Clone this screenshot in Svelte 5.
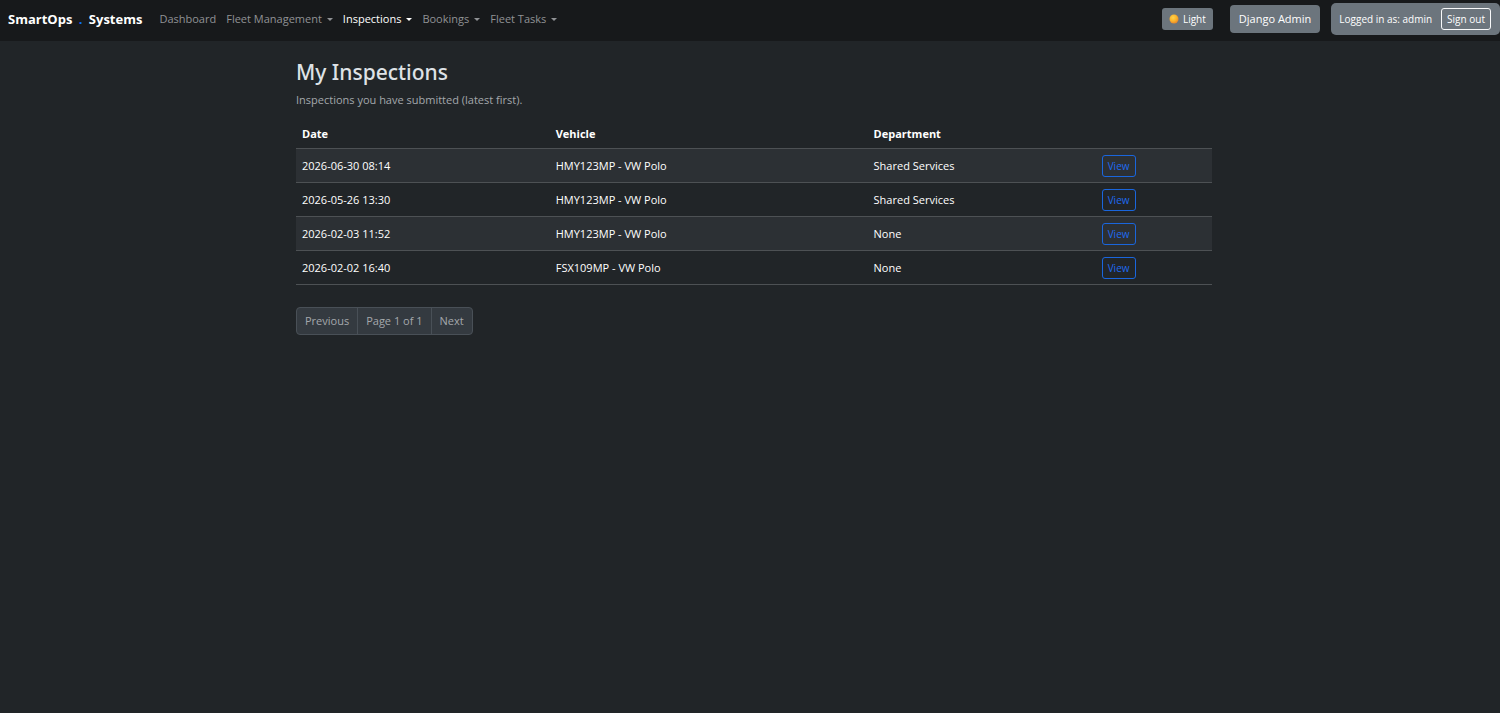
<script lang="ts">
  type NavItem = { label: string; menu: boolean; active?: boolean };

  const navItems: NavItem[] = [
    { label: 'Dashboard', menu: false },
    { label: 'Fleet Management', menu: true },
    { label: 'Inspections', menu: true, active: true },
    { label: 'Bookings', menu: true },
    { label: 'Fleet Tasks', menu: true }
  ];

  const inspections = [
    { date: '2026-06-30 08:14', vehicle: 'HMY123MP - VW Polo', department: 'Shared Services' },
    { date: '2026-05-26 13:30', vehicle: 'HMY123MP - VW Polo', department: 'Shared Services' },
    { date: '2026-02-03 11:52', vehicle: 'HMY123MP - VW Polo', department: 'None' },
    { date: '2026-02-02 16:40', vehicle: 'FSX109MP - VW Polo', department: 'None' }
  ];
</script>

<nav class="navbar">
  <a class="brand" href="#home">SmartOps <span class="dot">.</span> Systems</a>
  <ul class="links">
    {#each navItems as item}
      <li>
        {#if item.menu}
          <button class="nav-link" class:active={item.active} aria-haspopup="true">{item.label}<span class="caret"></span></button>
        {:else}
          <a class="nav-link" href="#dashboard">{item.label}</a>
        {/if}
      </li>
    {/each}
  </ul>
  <div class="tools">
    <button class="btn theme">
      <svg width="10" height="10" viewBox="0 0 10 10" aria-hidden="true">
        <defs>
          <radialGradient id="sun" cx="0.4" cy="0.35" r="0.65">
            <stop offset="0" stop-color="#ffd34d" />
            <stop offset="0.6" stop-color="#fbb32b" />
            <stop offset="1" stop-color="#e8892b" />
          </radialGradient>
        </defs>
        <circle cx="5" cy="5" r="4.5" fill="url(#sun)" />
      </svg>
      Light
    </button>
    <a class="btn admin" href="#admin">Django Admin</a>
    <div class="session">
      <span>Logged in as: admin</span>
      <button class="btn sign-out">Sign out</button>
    </div>
  </div>
</nav>

<main>
  <h1>My Inspections</h1>
  <p class="muted">Inspections you have submitted (latest first).</p>

  <table>
    <colgroup>
      <col class="col-date" />
      <col class="col-vehicle" />
      <col class="col-department" />
      <col />
    </colgroup>
    <thead>
      <tr>
        <th scope="col">Date</th>
        <th scope="col">Vehicle</th>
        <th scope="col">Department</th>
        <td></td>
      </tr>
    </thead>
    <tbody>
      {#each inspections as row}
        <tr>
          <td>{row.date}</td>
          <td>{row.vehicle}</td>
          <td>{row.department}</td>
          <td><a class="view" href="#view">View</a></td>
        </tr>
      {/each}
    </tbody>
  </table>

  <nav class="pager" aria-label="Pages">
    <button disabled>Previous</button>
    <span>Page 1 of 1</span>
    <button disabled>Next</button>
  </nav>
</main>

<style>
  :global(body) {
    margin: 0;
    background: #212528;
    color: #dee2e6;
    font-family: 'Open Sans', 'Noto Sans', sans-serif;
    font-size: 11px;
    font-weight: 500;
    line-height: 18px;
  }
  button { font: inherit; color: inherit; cursor: pointer; }
  a { text-decoration: none; }

  .navbar {
    display: flex;
    align-items: center;
    box-sizing: border-box;
    min-height: 41px;
    padding: 0 0 3px 8px;
    background: #17191b;
    white-space: nowrap;
  }
  .brand { margin-right: 12px; color: #fff; font-size: 13px; font-weight: 700; }
  .dot { margin: 0 3px; color: #0d6efd; }
  .links { display: flex; margin: 0; padding: 0; list-style: none; }
  .nav-link {
    display: flex;
    align-items: center;
    padding: 6px 5px;
    border: 0;
    background: none;
    color: #909295;
  }
  .nav-link.active { color: #fff; }
  .caret {
    margin-left: 5px;
    border: 3px solid transparent;
    border-top-color: currentColor;
    border-bottom: 0;
  }

  .tools { display: flex; align-items: center; margin-left: auto; }
  .btn { box-sizing: border-box; border: 0; border-radius: 4px; background: #6c757d; color: #fff; }
  .theme {
    display: flex;
    align-items: center;
    gap: 4px;
    height: 22px;
    margin-right: 17px;
    padding: 0 7px;
    border-radius: 3px;
    font-size: 10px;
  }
  .admin { margin-right: 11px; padding: 5px 9px; }
  .session {
    display: flex;
    align-items: center;
    gap: 9px;
    padding: 5px 9px 5px 8px;
    border-radius: 5px;
    background: #6c757d;
    color: #fff;
    font-size: 10px;
  }
  .sign-out { height: 22px; padding: 0 5px; border: 1px solid #f8f9fa; border-radius: 3px; background: none; }

  main { max-width: 916px; margin: 0 auto; padding: 18px 12px 24px 20px; }
  h1 { margin: 0 0 5px; font-family: 'Noto Sans', sans-serif; font-size: 21px; font-weight: 500; line-height: 27px; }
  .muted { margin: 0 0 11px; color: #a4a8ac; }

  table { width: 100%; border-collapse: collapse; table-layout: fixed; color: #fff; }
  .col-date { width: 27.7%; }
  .col-vehicle { width: 34.7%; }
  .col-department { width: 24.9%; }
  th, td { padding: 5px 6px; border-bottom: 1px solid #4d5154; text-align: left; }
  th { font-weight: 700; }
  tbody td { height: 23px; }
  tbody tr:nth-child(odd) { background: #2c3034; }
  .view {
    display: block;
    box-sizing: border-box;
    width: fit-content;
    height: 22px;
    padding: 0 5px;
    border: 1px solid #1a66dd;
    border-radius: 3px;
    color: #1f6bf0;
    font-size: 10px;
    line-height: 20px;
  }

  .pager {
    display: inline-flex;
    overflow: hidden;
    margin-top: 22px;
    border: 1px solid #495057;
    border-radius: 4px;
    background: #343a40;
    color: #a4a8ac;
  }
  .pager > * { padding: 4px 8px; border: 0; background: none; }
  .pager > * + * { border-left: 1px solid #495057; }
  .pager button { cursor: default; }
</style>
